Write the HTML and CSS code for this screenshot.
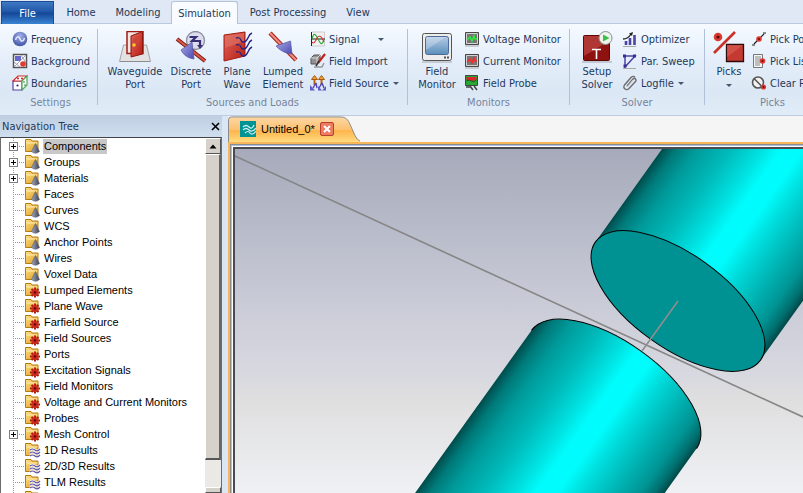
FILE: index.html
```html
<!DOCTYPE html>
<html lang="en">
<head>
<meta charset="utf-8">
<title>Untitled_0*</title>
<link rel="stylesheet" href="styles.css">
</head>
<body>
<svg class="defs" aria-hidden="true">
  <defs>
    <linearGradient id="gold" x1="0" y1="0" x2="1" y2="1"><stop offset="0" stop-color="#ffe08a"/><stop offset="1" stop-color="#dc9a1c"/></linearGradient>
    <linearGradient id="redFace" x1="0" y1="0" x2="1" y2="1"><stop offset="0" stop-color="#e0685c"/><stop offset="1" stop-color="#b81c12"/></linearGradient>
    <linearGradient id="cone" x1="0" y1="0" x2="1" y2="1"><stop offset="0" stop-color="#a9a9e6"/><stop offset="1" stop-color="#4a4ab4"/></linearGradient>
    <linearGradient id="steel" x1="0" y1="0" x2="1" y2="0"><stop offset="0" stop-color="#a3abbc"/><stop offset="1" stop-color="#3c4254"/></linearGradient>
    <radialGradient id="ball" cx=".5" cy=".3" r=".7"><stop offset="0" stop-color="#a4b1e8"/><stop offset="1" stop-color="#3f53a6"/></radialGradient>
    <linearGradient id="screen" x1="0" y1="0" x2="0" y2="1"><stop offset="0" stop-color="#b4cbe6"/><stop offset="1" stop-color="#5b8fbb"/></linearGradient>
    <g id="folder">
      <path d="M.5 1.500h5.500l1 1.500h6v10.500H.5z" fill="url(#gold)" stroke="#b57a10"/>
      <path d="M1.500 5h11" stroke="#fff0b8"/>
    </g>
    <symbol id="f-cone" viewBox="0 0 16 16"><use href="#folder"/><path d="M10.500 5.500l4 8q-4 3.500-8 0z" fill="url(#steel)" stroke="#5b6070" stroke-width=".6"/></symbol>
    <symbol id="f-gear" viewBox="0 0 16 16"><use href="#folder"/><path d="M10 5.500v10M5 10.500h10M6.500 7l7 7M13.500 7l-7 7" stroke="#b01812" stroke-width="2"/><circle cx="10" cy="10.500" r="3.200" fill="#d02a20"/><circle cx="10" cy="10.500" r="1.200" fill="#5a0804"/></symbol>
    <symbol id="f-wave" viewBox="0 0 16 16"><use href="#folder"/><path d="M5 8q2.500-2 5 0t5-1M5 11q2.500-2 5 0t5-1M5 14q2.500-2 5 0t5-1" fill="none" stroke="#fff" stroke-width="2.400"/><path d="M5 8q2.500-2 5 0t5-1M5 11q2.500-2 5 0t5-1M5 14q2.500-2 5 0t5-1" fill="none" stroke="#5b53a4" stroke-width="1.200"/></symbol>
  </defs>
</svg>

<nav class="tabs">
  <button class="tab file">File</button>
  <button class="tab home">Home</button>
  <button class="tab modeling">Modeling</button>
  <button class="tab active">Simulation</button>
  <button class="tab post">Post Processing</button>
  <button class="tab view">View</button>
</nav>

<div class="ribbon">
  <section class="group settings">
    <div class="tools">
      <div class="stack">
        <button class="small"><svg viewBox="0 0 16 16"><circle cx="8" cy="8" r="7.300" fill="url(#ball)"/><path d="M3.500 9c1-4 3.500-4 4.500-1s3.500 3 4.500-1" fill="none" stroke="#e4eaff" stroke-width="1.500"/></svg>Frequency</button>
        <button class="small"><svg viewBox="0 0 16 16"><path d="M1.500 1.500h13v13h-13z" fill="#fff" stroke="#555" stroke-width="1.500"/><path d="M3 3h6v5H3z" fill="#6668cc"/><path d="M2 14L14 2M9 2l5 8M2 9l6 5" stroke="#9aa0b4"/><circle cx="11" cy="11" r="2.800" fill="#e23b30"/></svg>Background</button>
        <button class="small"><svg viewBox="0 0 16 16"><path d="M1 6h9v9H1z" fill="#fff" stroke="#5146a0" stroke-width="1.200"/><path d="M1 6l5-5h9l-5 5z" fill="#fff" stroke="#d02c24" stroke-width="1.200"/><path d="M10 6l5-5v9l-5 5z" fill="#fff" stroke="#54a45c" stroke-width="1.200"/><circle cx="5.500" cy="10.500" r="1.100" fill="#332a88"/><circle cx="6" cy="3.500" r=".9" fill="#c00"/><circle cx="10" cy="3.500" r=".9" fill="#c00"/><path d="M12 6v2M13 9v2" stroke="#278a34"/></svg>Boundaries</button>
      </div>
    </div>
    <h2>Settings</h2>
  </section>

  <section class="group sources">
    <div class="tools">
      <button class="big"><svg viewBox="0 0 32 32"><path d="M4.500 14h23l4 16.500H.5z" fill="#e2e2e2" stroke="#a5a5a5"/><path d="M1 30.500h30" stroke="#8d8d8d"/><path d="M8 .5h16v22H8z" fill="#f3e4e0" stroke="#a01a14" stroke-width="1.500"/><path d="M12 5L23.500.500v22.500L12 26z" fill="url(#redFace)" stroke="#901811"/><path d="M14 8l7-3.500v7L14 14z" fill="#ce4438"/><circle cx="15" cy="14" r="1.800" fill="#ffcc24"/></svg><span>Waveguide<br>Port</span></button>
      <button class="big"><svg viewBox="0 0 32 32"><circle cx="20.500" cy="9.500" r="9" fill="#dcdcec" stroke="#8b8b9c" stroke-width="1.300"/><path d="M14.500 6H21l-4 4h8v5" fill="none" stroke="#383078" stroke-width="2.200"/><path d="M22 14h6l-3 4z" fill="#383078"/><path d="M2 8l28 22" stroke="#7d1a14" stroke-width="4"/><path d="M2 8l28 22" stroke="#dc5a4c" stroke-width="2"/><path d="M17 11l2 17Q10 27 6 19z" fill="url(#cone)" stroke="#55559c" stroke-width=".7"/></svg><span>Discrete<br>Port</span></button>
      <button class="big"><svg viewBox="0 0 32 32"><path d="M3 4l21-3v24L3 30z" fill="url(#redFace)" stroke="#a31c14"/><path d="M4 5l19-3v8L4 17z" fill="#e07468" opacity=".6"/><path d="M15 7c7-2 3 5 8 4s3-7 8-9M15 14c7-2 3 5 8 4s3-7 8-9M15 21c7-2 3 5 8 4s3-7 8-9" fill="none" stroke="#2c2484" stroke-width="1.400"/></svg><span>Plane<br>Wave</span></button>
      <button class="big"><svg viewBox="0 0 32 32"><path d="M3 2l26 27" stroke="#a82c24" stroke-width="4.400"/><path d="M3 2l26 27" stroke="#ee8c80" stroke-width="2"/><path d="M23.500 10l1.500 13Q15 22 9 15z" fill="url(#cone)" stroke="#5555a4" stroke-width=".7"/></svg><span>Lumped<br>Element</span></button>
      <div class="stack">
        <button class="small"><svg viewBox="0 0 16 16"><path d="M1.500 1h13v14h-13z" fill="#f2f2f2" stroke="#ccc"/><path d="M1.500 1v14M1 8h14" stroke="#222"/><path d="M2 8c2-8 4-4 6 0s4 8 6 0" fill="none" stroke="#2ba838" stroke-width="1.100"/><path d="M2 11c2 3 4-2 5-4s4-4 7 4" fill="none" stroke="#cc3a38" stroke-width="1.100"/></svg>Signal<i class="caret wide"></i></button>
        <button class="small"><svg viewBox="0 0 16 16"><path d="M1 5l3-3h6v6l-3 3H1z" fill="#929292" stroke="#555"/><path d="M1 5h6v6M7 5l3-3" fill="none" stroke="#ddd"/><path d="M4 14h8l2-4" fill="none" stroke="#999" stroke-width="1.500"/><path d="M15 1L8 10" stroke="#c32018" stroke-width="2.200"/><path d="M9 8l-3 5" stroke="#333" stroke-width="1.600"/></svg>Field Import</button>
        <button class="small"><svg viewBox="0 0 16 16"><path d="M4.500 10V4M11.500 10V4" stroke="#b86410" stroke-width="2"/><path d="M1.500 4.500l3-4 3 4zM8.500 4.500l3-4 3 4z" fill="#f5a03a" stroke="#a85a0c"/><path d="M6 8l-3 5M6 8l1 5M12 8l-3 5M12 8l2 5" stroke="#5146b4" stroke-width="1.400"/><path d="M0 10v5.500h5zM8 15.500h4L8 11zM12 15.500h4V11z" fill="#6259c8"/></svg>Field Source<i class="caret"></i></button>
      </div>
    </div>
    <h2>Sources and Loads</h2>
  </section>

  <section class="group monitors">
    <div class="tools">
      <button class="big"><svg viewBox="0 0 32 32"><rect x="1.500" y="2.500" width="29" height="27" rx="2" fill="#ededed" stroke="#555"/><rect x="4.500" y="5.500" width="23" height="18" rx="2" fill="url(#screen)" stroke="#4d6a94"/><path d="M5 6h20L5 19z" fill="#fff" opacity=".25"/><path d="M23 26.500h2m1 0h2" stroke="#555" stroke-width="2"/><path d="M1 31h30" stroke="#aaa"/></svg><span>Field<br>Monitor</span></button>
      <div class="stack">
        <button class="small"><svg viewBox="0 0 16 16"><path d="M1.500 1.500h13v12h-13z" fill="#777" stroke="#464646"/><path d="M2.500 2.500h11v10h-11z" fill="none" stroke="#d4d4d4"/><path d="M3 9l3-3 2 4 2-5 1 3h2" fill="none" stroke="#2ee83c" stroke-width="1.500"/><path d="M1 15h14" stroke="#aaa"/></svg>Voltage Monitor</button>
        <button class="small"><svg viewBox="0 0 16 16"><path d="M1.500 1.500h13v12h-13z" fill="#777" stroke="#464646"/><path d="M2.500 2.500h11v10h-11z" fill="none" stroke="#d4d4d4"/><path d="M3 9l3-3 2 4 2-5 1 3h2" fill="none" stroke="#f02c2c" stroke-width="1.500"/><path d="M1 15h14" stroke="#aaa"/></svg>Current Monitor</button>
        <button class="small"><svg viewBox="0 0 16 16"><path d="M1.500.5h12v10h-12z" fill="#27a834" stroke="#444"/><path d="M2.500 2h10v3l-5 1-5-1z" fill="#d8262c"/><path d="M2.500 6q3-2 5 0t5-1" fill="none" stroke="#205020"/><path d="M2 12h5M6 11l3 4M10 11l3 4" stroke="#444" stroke-width="1.500"/></svg>Field Probe</button>
      </div>
    </div>
    <h2>Monitors</h2>
  </section>

  <section class="group solver">
    <div class="tools">
      <button class="big"><svg viewBox="0 0 32 32"><path d="M1 31h30" stroke="#9da3ad"/><rect x="2.500" y="4.500" width="26" height="25" rx="1" fill="#8e1210" stroke="#5c0806"/><path d="M3 5h25v5L3 25z" fill="#c4504c" opacity=".6"/><path d="M11 18.500h9M15.500 18.500V28" stroke="#fff" stroke-width="1.600"/><circle cx="24.500" cy="7" r="6.500" fill="#eef3ee" stroke="#8a8f8a"/><path d="M22 3.500L28.500 7 22 10.500z" fill="#3cc048"/></svg><span>Setup<br>Solver</span></button>
      <div class="stack">
        <button class="small"><svg viewBox="0 0 16 16"><path d="M4 14v-4M8 14V7M12.500 14V4" stroke="#4c45a6" stroke-width="2.600"/><path d="M1 8q5 0 8-5" fill="none" stroke="#222" stroke-width="1.300"/><path d="M7 2.500L11 1l-1 4z" fill="#222"/><path d="M1 15.500h13" stroke="#aaa"/></svg>Optimizer</button>
        <button class="small"><svg viewBox="0 0 16 16"><path d="M3 14V3h10z" fill="none" stroke="#4a43a4" stroke-width="1.500"/><path d="M1 1.500h3v3H1zM11 1.500h3v3h-3zM1.500 11.500h3v3h-3z" fill="#372f90"/><path d="M1 15.500h13" stroke="#aaa"/></svg>Par. Sweep</button>
        <button class="small"><svg viewBox="0 0 16 16"><path d="M5 11l6-7q1.500-1.500 2.500 0t0 2.500L7 13.500q-2 2-4 .5t-.5-4L9 2.500q2-2 4-.5" fill="none" stroke="#6d6d6d" stroke-width="1.400"/><path d="M5 12l6-7" stroke="#c5c5c5"/></svg>Logfile<i class="caret"></i></button>
      </div>
    </div>
    <h2>Solver</h2>
  </section>

  <section class="group picks">
    <div class="tools">
      <button class="big"><svg viewBox="0 0 32 32"><path d="M1 22L22 1" stroke="#c83228" stroke-width="2.600"/><circle cx="5" cy="6" r="4.300" fill="#d83a30"/><circle cx="5" cy="6" r="1.600" fill="#5a0c08"/><path d="M13.500 13.500h17v17h-17z" fill="#c43a32" stroke="#2c0c0a" stroke-width="1.300"/><path d="M14 14h16L14 26z" fill="#dc6258" opacity=".6"/></svg><span>Picks<i class="caret below"></i></span></button>
      <div class="stack">
        <button class="small"><svg viewBox="0 0 16 16"><path d="M3 13L13 3" stroke="#222" stroke-width="1.200"/><path d="M1 14h3M12 2h3" stroke="#222" stroke-width="1.200"/><circle cx="8" cy="8" r="2.800" fill="#da3a30"/><circle cx="8" cy="8" r="1" fill="#700"/></svg>Pick Points</button>
        <button class="small"><svg viewBox="0 0 16 16"><path d="M2.500 1.500h9v13h-9z" fill="#f5f5f5" stroke="#777"/><path d="M4 4h6M4 6h6M4 8h5M4 10h5M4 12h5" stroke="#888"/><circle cx="11.500" cy="8" r="2.800" fill="#da3a30"/><circle cx="11.500" cy="8" r="1" fill="#700"/></svg>Pick Lists</button>
        <button class="small"><svg viewBox="0 0 16 16"><circle cx="7" cy="7.500" r="5.500" fill="#f2f2f2" stroke="#555" stroke-width="1.600"/><path d="M3 3.500l8 8" stroke="#555" stroke-width="1.600"/><circle cx="12.500" cy="12" r="2.600" fill="#da3a30"/><circle cx="12.500" cy="12" r="1" fill="#700"/></svg>Clear Picks</button>
      </div>
    </div>
    <h2>Picks</h2>
  </section>
</div>

<main class="work">
  <aside class="panel">
    <header class="panel-head"><h1>Navigation Tree</h1><button class="close" aria-label="Close"><svg viewBox="0 0 9 9"><path d="M1 1l7 7M8 1L1 8" stroke="#000" stroke-width="1.600"/></svg></button></header>
    <div class="tree-box">
      <ul class="tree">
        <li><button class="plus" aria-label="Expand"></button><svg><use href="#f-cone"/></svg><span class="sel">Components</span></li>
        <li><button class="plus" aria-label="Expand"></button><svg><use href="#f-cone"/></svg><span>Groups</span></li>
        <li><button class="plus" aria-label="Expand"></button><svg><use href="#f-cone"/></svg><span>Materials</span></li>
        <li><svg><use href="#f-cone"/></svg><span>Faces</span></li>
        <li><svg><use href="#f-cone"/></svg><span>Curves</span></li>
        <li><svg><use href="#f-cone"/></svg><span>WCS</span></li>
        <li><svg><use href="#f-cone"/></svg><span>Anchor Points</span></li>
        <li><svg><use href="#f-cone"/></svg><span>Wires</span></li>
        <li><svg><use href="#f-cone"/></svg><span>Voxel Data</span></li>
        <li><svg><use href="#f-gear"/></svg><span>Lumped Elements</span></li>
        <li><svg><use href="#f-gear"/></svg><span>Plane Wave</span></li>
        <li><svg><use href="#f-gear"/></svg><span>Farfield Source</span></li>
        <li><svg><use href="#f-gear"/></svg><span>Field Sources</span></li>
        <li><svg><use href="#f-gear"/></svg><span>Ports</span></li>
        <li><svg><use href="#f-gear"/></svg><span>Excitation Signals</span></li>
        <li><svg><use href="#f-gear"/></svg><span>Field Monitors</span></li>
        <li><svg><use href="#f-gear"/></svg><span>Voltage and Current Monitors</span></li>
        <li><svg><use href="#f-gear"/></svg><span>Probes</span></li>
        <li><button class="plus" aria-label="Expand"></button><svg><use href="#f-gear"/></svg><span>Mesh Control</span></li>
        <li><svg><use href="#f-wave"/></svg><span>1D Results</span></li>
        <li><svg><use href="#f-wave"/></svg><span>2D/3D Results</span></li>
        <li><svg><use href="#f-wave"/></svg><span>TLM Results</span></li>
        <li><svg><use href="#f-wave"/></svg></li>
      </ul>
      <div class="scroll">
        <button class="scroll-btn" aria-label="Scroll up"><svg viewBox="0 0 8 5"><path d="M4 .5L7.500 4.500h-7z"/></svg></button>
        <div class="thumb"></div>
        <div class="track"></div>
        <button class="scroll-btn end" aria-label="Scroll down"></button>
      </div>
    </div>
  </aside>

  <section class="doc">
    <div class="doc-tabs">
      <div class="doc-tab">
        <svg class="shape" viewBox="0 0 132 28" preserveAspectRatio="none" aria-hidden="true">
          <defs><linearGradient id="tabFill" x1="0" y1="0" x2="0" y2="1"><stop offset="0" stop-color="#fcd7a4"/><stop offset=".5" stop-color="#fdc172"/><stop offset=".55" stop-color="#ffb44c"/><stop offset="1" stop-color="#ffdb80"/></linearGradient></defs>
          <path d="M.5 28V4q0-3 3-3H112c6 0 8 3 10 8l5 12q2 5 5 6v1z" fill="url(#tabFill)"/>
          <path d="M.5 28V4q0-3 3-3H112c6 0 8 3 10 8l5 12q2 5 5 6" fill="none" stroke="#878787"/>
        </svg>
        <svg class="doc-icon" viewBox="0 0 16 16"><path d="M0 0h16v16H0z" fill="#009394"/><path d="M3 6q3-3 6 0t5-2M3 9q3-3 6 0t7-2M5 12q3-3 5 0t6-2" fill="none" stroke="#cdf0ee" stroke-width="1.200"/></svg>
        <span>Untitled_0*</span>
        <button class="doc-close" aria-label="Close document"><svg viewBox="0 0 8 8"><path d="M1 1l6 6M7 1L1 7" stroke="#fff" stroke-width="2"/></svg></button>
      </div>
    </div>
    <div class="frame">
      <svg class="scene" viewBox="0 0 568 344" preserveAspectRatio="xMinYMin slice" role="img" aria-label="3D view of two cylinders">
        <defs>
          <linearGradient id="sky" x1="0" y1="0" x2="0" y2="1"><stop offset="0" stop-color="#a6aaba"/><stop offset=".45" stop-color="#c9cbd7"/><stop offset=".66" stop-color="#d8d9e0"/><stop offset=".72" stop-color="#dededf"/><stop offset="1" stop-color="#f0f1f4"/></linearGradient>
          <linearGradient id="tube" x1="0" y1="0" x2="1" y2="0">
            <stop offset="0" stop-color="#004c4c"/><stop offset=".06" stop-color="#007a7a"/><stop offset=".14" stop-color="#009a9a"/><stop offset=".28" stop-color="#00bcbc"/><stop offset=".4" stop-color="#00e0e0"/><stop offset=".48" stop-color="#00fcfc"/><stop offset=".57" stop-color="#00fcfc"/><stop offset=".66" stop-color="#00dcdc"/><stop offset=".78" stop-color="#00b8b8"/><stop offset=".9" stop-color="#009494"/><stop offset=".96" stop-color="#007070"/><stop offset="1" stop-color="#004848"/>
          </linearGradient>
        </defs>
        <path d="M0 0h568v344H0z" fill="url(#sky)"/>
        <g transform="translate(443 152) rotate(35.600)">
          <path d="M-101.500 0V-400H101.500V0z" fill="url(#tube)"/>
          <ellipse rx="101.500" ry="47" fill="#009292" stroke="#000"/>
        </g>
        <g transform="translate(379 240.500) rotate(35.600)">
          <path d="M-101.500 400V0A101.500 47 0 0 1 101.500 0V400z" fill="url(#tube)"/>
          <path d="M-101.500 0A101.500 47 0 0 1 101.500 0" fill="none" stroke="#000"/>
        </g>
        <path d="M0 7L568 268" stroke="#868686" stroke-width="1.600"/>
        <path d="M443 152l-36 50" stroke="#8e8e8e" stroke-width="1.600"/>
      </svg>
    </div>
  </section>
</main>
</body>
</html>
```
FILE: styles.css
```css
* { box-sizing: border-box; }
html, body { height: 100%; margin: 0; }
body {
  display: flex;
  flex-direction: column;
  overflow: hidden;
  background: #dbe6f4;
  color: #1e395b;
  font: 11px/13px "DejaVu Sans Condensed", "DejaVu Sans", sans-serif;
}
button { margin: 0; padding: 0; border: 0; background: none; color: inherit; font: inherit; }
h1, h2 { margin: 0; font: inherit; }
svg { display: block; flex: none; }
.defs { position: absolute; width: 0; height: 0; }

/* Ribbon tabs */
.tabs {
  display: flex;
  flex: none;
  height: 24px;
  padding: 1px 0 0 1px;
  background: #dfe8f4;
  border-bottom: 1px solid #b9c9de;
  white-space: nowrap;
}
.tab { height: 23px; }
.file {
  width: 53px;
  color: #fff;
  border: 1px solid #1c4a94;
  border-bottom: 0;
  background: linear-gradient(#3f79c4, #1f55a8 45%, #154596 50%, #3a86d4);
}
.home { width: 54px; }
.modeling { width: 60px; }
.active {
  width: 67px;
  margin: 0 3px;
  background: #f8fbff;
  border: 1px solid #b4c3d8;
  border-bottom: 0;
  border-radius: 3px 3px 0 0;
}
.post { width: 94px; }
.view { width: 46px; }

/* Ribbon */
.ribbon {
  display: flex;
  flex: none;
  padding: 4px 0;
  overflow: hidden;
  background: linear-gradient(#f6faff, #e4eefa 40%, #dce7f5 75%, #e1ecf9);
  border-bottom: 1px solid #bccbdf;
  white-space: nowrap;
}
.group { flex: none; padding-left: 8px; border-right: 1px solid #b0c1d9; margin: 1px 0 6px; height: 76px; }
.tools { display: flex; gap: 4px; }
.group h2 { padding: 2px 8px 0 0; color: #75859c; text-align: center; }
.stack { display: grid; grid-auto-rows: 22px; align-items: center; margin-top: -1px; }
.small { display: flex; align-items: center; gap: 3px; text-align: left; }
.small svg { width: 16px; height: 16px; }
.big { display: flex; flex-direction: column; align-items: center; gap: 2px; padding-top: 2px; }
.big svg { width: 32px; height: 32px; }
.caret {
  border: 3px solid transparent;
  border-top: 3px solid #45566e;
  border-bottom: 0;
  margin-left: 1px;
}
.caret.wide { margin-left: 16px; }
.caret.below { display: block; width: 0; margin: 6px auto 0; }
.settings { width: 98px; padding-left: 12px; }
.sources { width: 310px; }
.sources .tools { display: grid; grid-template-columns: 58px 46px 38px 46px 94px; }
.monitors { width: 162px; }
.monitors .tools { display: grid; grid-template-columns: 42px 100px; gap: 6px; }
.solver { width: 135px; }
.solver .tools { display: grid; grid-template-columns: 38px 84px; gap: 6px; }
.picks { width: 136px; }
.picks .tools { display: grid; grid-template-columns: 32px 84px; gap: 6px; }

/* Work area */
.work { display: flex; flex: 1; min-height: 0; }
.panel { display: flex; flex-direction: column; flex: none; width: 222px; min-height: 0; }
.panel-head {
  display: flex;
  align-items: center;
  justify-content: space-between;
  flex: none;
  height: 21px;
  padding: 0 2px;
  background: linear-gradient(#bfcee0, #cfdff0);
}
.close svg { width: 9px; height: 9px; }
.tree-box {
  display: flex;
  flex: 1;
  min-height: 0;
  border: 1px solid #6c6c6c;
  border-bottom: 0;
  border-top-color: #444;
  background: #fff;
}
.tree {
  flex: 1;
  margin: 0;
  padding: 0 0 0 8px;
  overflow: hidden;
  list-style: none;
  color: #000;
  font: 11px/15px "Liberation Sans", Arial, sans-serif;
  white-space: nowrap;
}
.tree li {
  display: grid;
  grid-template-columns: 9px 7px 16px auto;
  align-items: center;
  justify-content: start;
  height: 16px;
  background:
    repeating-linear-gradient(#999 0 1px, transparent 1px 2px) 4px 0 / 1px 16px no-repeat,
    repeating-linear-gradient(90deg, #999 0 1px, transparent 1px 2px) 4px 8px / 12px 1px no-repeat;
}
.tree li > svg { grid-column: 3; width: 16px; height: 16px; }
.tree li > span { grid-column: 4; margin-left: 2px; padding: 0 1px; }
.tree li > .sel { background: #c8c8c8; }
.plus {
  grid-column: 1;
  width: 9px;
  height: 9px;
  border: 1px solid #808080;
  background:
    linear-gradient(#000, #000) center / 5px 1px no-repeat,
    linear-gradient(#000, #000) center / 1px 5px no-repeat,
    #fff;
}
.scroll { display: flex; flex-direction: column; flex: none; width: 16px; }
.scroll-btn {
  display: grid;
  place-items: center;
  flex: none;
  height: 16px;
  background: #d6d2cb;
  border: 1px solid #fff;
  border-right-color: #555;
  border-bottom-color: #555;
}
.scroll-btn svg { width: 8px; height: 5px; }
.scroll-btn.end { height: 6px; }
.thumb {
  flex: 11;
  background: #d6d2cb;
  border: 1px solid #fff;
  border-right: 2px solid #666;
  border-bottom: 2px solid #555;
}
.track { flex: 1; background: #ebe9e6; }

/* Document */
.doc { display: flex; flex-direction: column; flex: 1; min-width: 0; margin-left: 6px; background: #f5f5f5; }
.doc-tabs { flex: none; height: 26px; }
.doc-tab {
  position: relative;
  display: flex;
  align-items: center;
  gap: 5px;
  width: 132px;
  height: 26px;
  padding-left: 12px;
  color: #000;
  font: 11px/13px "Liberation Sans", Arial, sans-serif;
}
.doc-tab > * { position: relative; }
.doc-tab .shape { position: absolute; inset: 0; width: 100%; height: 100%; }
.doc-icon { width: 16px; height: 16px; }
.doc-close {
  display: grid;
  place-items: center;
  width: 14px;
  height: 14px;
  border: 1px solid #b8402c;
  border-radius: 2px;
  background: #ee7c60;
}
.doc-close svg { width: 8px; height: 8px; }
.frame {
  display: flex;
  flex: 1;
  min-height: 0;
  border-top: 2px solid #f7b65c;
  border-left: 2px solid #f7b65c;
  box-shadow: inset 1px 1px #8d8d8d, inset 2px 2px #a9bfe0, inset 3px 3px #fff, inset 5px 5px #4a4a50;
  padding: 5px 0 0 5px;
}
.scene { flex: 1; min-width: 0; width: 100%; height: 100%; }
```
